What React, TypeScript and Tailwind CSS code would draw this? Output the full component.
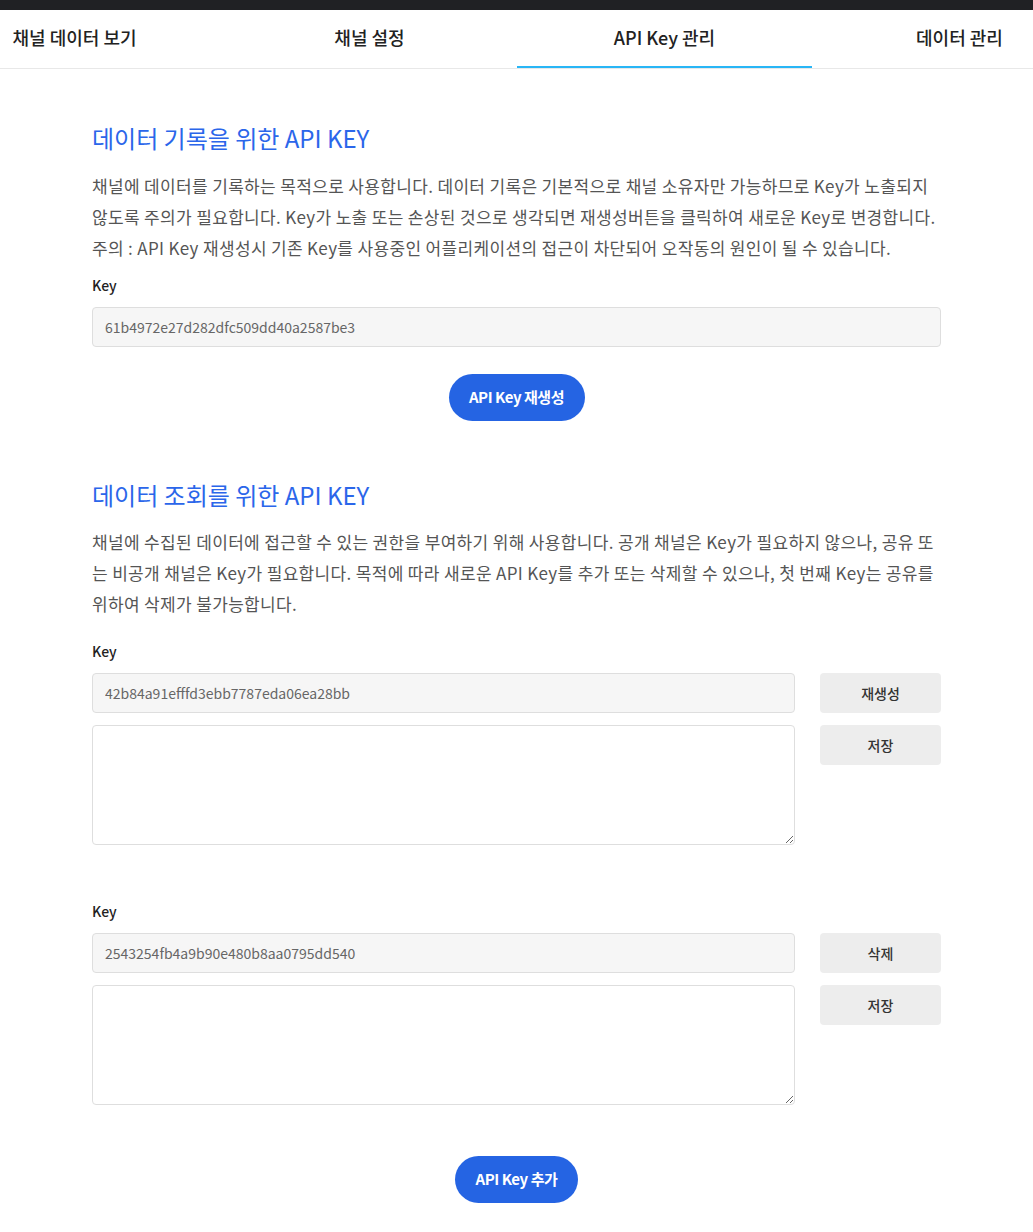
import React from 'react';

const FONT = { fontFamily: '"Noto Sans CJK KR", "Noto Sans", sans-serif' };

const tabs = ['채널 데이터 보기', '채널 설정', 'API Key 관리', '데이터 관리'];

const KeyInput = ({ value }: { value: string }) => (
  <input
    readOnly
    value={value}
    className="h-10 w-full rounded-[4px] border border-[#dedede] bg-[#f6f6f6] px-[12px] text-[14px] text-[#666] outline-none"
  />
);

const GrayButton = ({ label }: { label: string }) => (
  <button className="h-10 w-[121px] rounded-[4px] bg-[#ededed] text-[14px] font-medium text-[#333]">{label}</button>
);

const KeyBlock = ({ value, action }: { value: string; action: string }) => (
  <div>
    <div className="text-[14px] font-medium leading-5 text-[#222]">Key</div>
    <div className="mt-[12px] flex gap-[25px]">
      <div className="flex flex-1 flex-col gap-3">
        <KeyInput value={value} />
        <textarea className="h-[120px] w-full rounded-[4px] border border-[#dedede] bg-white p-3 text-[14px] outline-none" />
      </div>
      <div className="flex flex-col gap-3">
        <GrayButton label={action} />
        <GrayButton label="저장" />
      </div>
    </div>
  </div>
);

export default function App() {
  return (
    <div className="min-h-screen bg-white" style={FONT}>
      <div className="h-[10px] bg-[#202124]" />
      <nav className="relative h-[59px] overflow-hidden border-b border-[#e8e8e8]">
        <div className="-ml-[73px] flex h-full">
          {tabs.map((t, i) => (
            <div
              key={t}
              className="relative flex h-full w-[295px] shrink-0 items-center justify-center pb-[3px] text-[18px] font-medium text-[#222]"
            >
              {t}
              {i === 2 && <div className="absolute -bottom-px left-0 right-0 h-[3px] bg-[#29b6f6]" />}
            </div>
          ))}
        </div>
      </nav>

      <main className="mx-auto w-[849px] pb-10">
        <section className="pt-[51px]">
          <h2 className="text-[24px] leading-9 font-normal text-[#2b66ea]">데이터 기록을 위한 API KEY</h2>
          <p className="mt-[14px] text-[17px] leading-[31px] tracking-[0.02em] text-[#555]">
            채널에 데이터를 기록하는 목적으로 사용합니다. 데이터 기록은 기본적으로 채널 소유자만 가능하므로 Key가 노출되지 않도록 주의가 필요합니다. Key가 노출 또는 손상된 것으로 생각되면 재생성버튼을 클릭하여 새로운 Key로 변경합니다. 주의 : API Key 재생성시 기존 Key를 사용중인 어플리케이션의 접근이 차단되어 오작동의 원인이 될 수 있습니다.
          </p>
          <div className="mt-[12px] text-[14px] font-medium leading-5 text-[#222]">Key</div>
          <div className="mt-[12px]">
            <KeyInput value="61b4972e27d282dfc509dd40a2587be3" />
          </div>
          <div className="mt-[27px] flex justify-center">
            <button className="h-[47px] w-[136px] rounded-full bg-[#2564e3] text-[15px] font-bold tracking-[-0.03em] text-white">
              API Key 재생성
            </button>
          </div>
        </section>

        <section className="pt-[56px]">
          <h2 className="text-[24px] leading-9 font-normal text-[#2b66ea]">데이터 조회를 위한 API KEY</h2>
          <p className="mt-[13px] text-[17px] leading-[31px] tracking-[0.02em] text-[#555]">
            채널에 수집된 데이터에 접근할 수 있는 권한을 부여하기 위해 사용합니다. 공개 채널은 Key가 필요하지 않으나, 공유 또는 비공개 채널은 Key가 필요합니다. 목적에 따라 새로운 API Key를 추가 또는 삭제할 수 있으나, 첫 번째 Key는 공유를 위하여 삭제가 불가능합니다.
          </p>
          <div className="mt-[22px]">
            <KeyBlock value="42b84a91efffd3ebb7787eda06ea28bb" action="재생성" />
          </div>
          <div className="mt-[56px]">
            <KeyBlock value="2543254fb4a9b90e480b8aa0795dd540" action="삭제" />
          </div>
          <div className="mt-[51px] flex justify-center">
            <button className="h-[47px] w-[123px] rounded-full bg-[#2564e3] text-[15px] font-bold tracking-[-0.03em] text-white">
              API Key 추가
            </button>
          </div>
        </section>
      </main>
    </div>
  );
}
